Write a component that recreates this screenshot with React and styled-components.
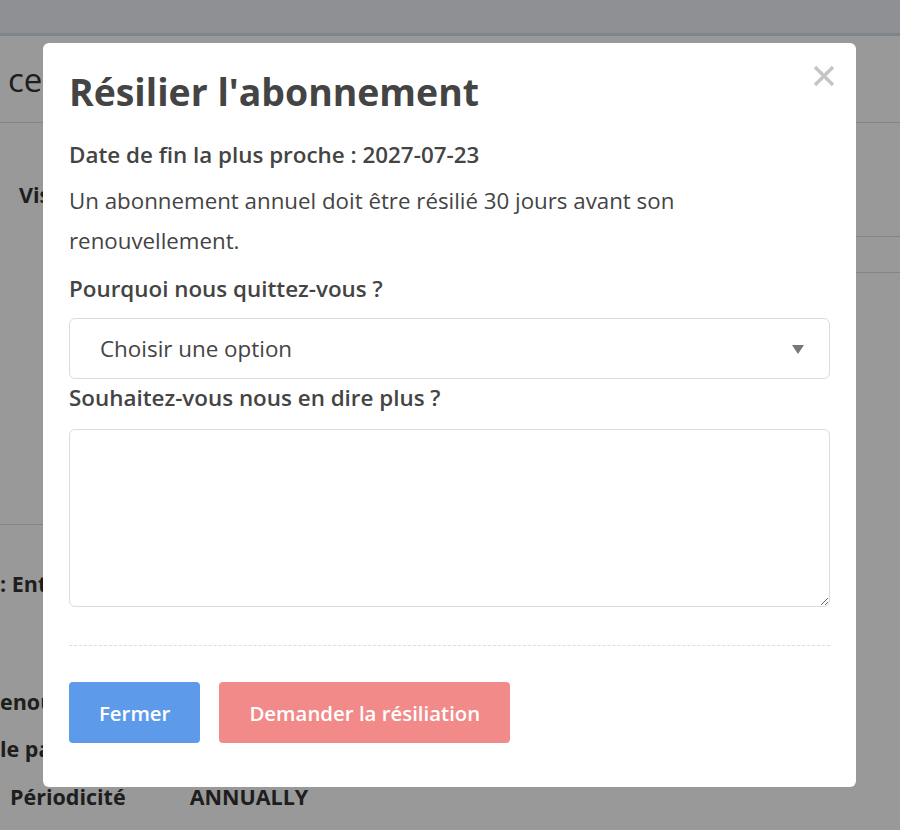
import React from "react";
import styled, { createGlobalStyle } from "styled-components";

const Global = createGlobalStyle`
  html, body { margin: 0; padding: 0; background: #fff; }
  body { font-family: "Open Sans", "Liberation Sans", sans-serif; color: #444; }
  * { box-sizing: border-box; }
`;

const Page = styled.div`
  width: 900px;
  height: 830px;
  overflow: hidden;
  background: #fff;
`;

const TopBar = styled.div`
  height: 36px;
  background: #edf0f5;
  border-bottom: 3px solid #d4dde8;
`;

const PageHead = styled.div`
  height: 87px;
  display: flex;
  align-items: center;
  padding: 0 0 0 8px;
  border-bottom: 1px solid #dcdcdc;
  font-size: 33px;
  color: #333;
`;

const PageBody = styled.div`
  display: grid;
  grid-template-columns: 450px 1fr;
`;

const LeftCol = styled.div`
  padding-top: 57px;
  height: 402px;
  border-bottom: 1px solid #dcdcdc;
`;

const RightCol = styled.div`
  padding-top: 113px;
`;

const RightRow = styled.div`
  height: 36px;
  border-top: 1px solid #dcdcdc;
`;

const BgLabel = styled.div`
  font-weight: 700;
  font-size: 21.5px;
  line-height: 29px;
  color: #333;
  padding-left: ${(p) => p.$indent || 0}px;
  margin-top: ${(p) => p.$top || 0}px;
  display: flex;
  gap: 64px;
`;

const Overlay = styled.div`
  position: fixed;
  inset: 0;
  background: rgba(0, 0, 0, 0.4);
  padding: 43px 0 0 43px;
`;

const Modal = styled.div`
  width: 813px;
  background: #fff;
  border-radius: 6px;
  padding: 25px 26px 44px 26px;
`;

const Header = styled.div`
  display: flex;
  justify-content: space-between;
  align-items: flex-start;
`;

const Title = styled.h2`
  margin: 0;
  font-size: 37.4px;
  line-height: 48px;
  font-weight: 700;
  color: #444;
`;

const Close = styled.button`
  border: 0;
  background: none;
  padding: 0;
  margin: -3px -5px 0 0;
  width: 22px;
  height: 22px;
  display: flex;
  cursor: pointer;
`;

const Strong = styled.div`
  font-size: 22.4px;
  line-height: 30px;
  font-weight: 600;
  color: #444;
  margin-top: ${(p) => p.$top}px;
`;

const Para = styled.p`
  margin: 11px 0 0;
  font-size: 22.3px;
  line-height: 40px;
  color: #444;
`;

const Select = styled.div`
  margin-top: 14px;
  height: 61px;
  border: 1px solid #dcdcdc;
  border-radius: 6px;
  display: flex;
  align-items: center;
  justify-content: space-between;
  padding: 0 25px 0 30px;
  font-size: 22.4px;
  color: #444;
`;

const Arrow = styled.span`
  width: 0;
  height: 0;
  border-left: 6px solid transparent;
  border-right: 6px solid transparent;
  border-top: 9px solid #777;
  margin-top: 2px;
`;

const TextArea = styled.textarea`
  display: block;
  margin-top: 16px;
  width: 100%;
  height: 178px;
  border: 1px solid #dcdcdc;
  border-radius: 6px;
  resize: vertical;
  font-family: inherit;
  font-size: 20px;
  outline: none;
`;

const Divider = styled.div`
  margin-top: 38px;
  border-top: 1px dashed #dddddd;
`;

const Actions = styled.div`
  margin-top: 36px;
  display: flex;
  gap: 19px;
`;

const Button = styled.button`
  height: 61px;
  padding: 0 ${(p) => p.$pad}px;
  border: 0;
  border-radius: 4px;
  background: ${(p) => p.$bg};
  color: #fff;
  font-family: inherit;
  font-size: 20.4px;
  font-weight: 550;
  cursor: pointer;
`;

export default function App() {
  return (
    <Page>
      <Global />
      <TopBar />
      <PageHead>ce compte</PageHead>
      <PageBody>
        <LeftCol>
          <BgLabel $indent={19}>Visibilité</BgLabel>
        </LeftCol>
        <RightCol>
          <RightRow />
          <RightRow />
        </RightCol>
      </PageBody>
      <BgLabel $top={44}>: Entreprise</BgLabel>
      <BgLabel $top={89}>enouvellement</BgLabel>
      <BgLabel $top={18}>le paiement</BgLabel>
      <BgLabel $top={19} $indent={10}>
        <span>Périodicité</span>
        <span>ANNUALLY</span>
      </BgLabel>

      <Overlay>
        <Modal>
          <Header>
            <Title>Résilier l'abonnement</Title>
            <Close aria-label="Fermer">
              <svg width="22" height="22" viewBox="0 0 22 22">
                <path d="M2 2 L20 20 M20 2 L2 20" stroke="#c4c4c4" strokeWidth="3.4" />
              </svg>
            </Close>
          </Header>
          <Strong $top={24}>Date de fin la plus proche : 2027-07-23</Strong>
          <Para>Un abonnement annuel doit être résilié 30 jours avant son renouvellement.</Para>
          <Strong $top={13}>Pourquoi nous quittez-vous ?</Strong>
          <Select>
            <span>Choisir une option</span>
            <Arrow />
          </Select>
          <Strong $top={4}>Souhaitez-vous nous en dire plus ?</Strong>
          <TextArea />
          <Divider />
          <Actions>
            <Button $bg="#5d9bea" $pad={30}>Fermer</Button>
            <Button $bg="#f28a8a" $pad={30}>Demander la résiliation</Button>
          </Actions>
        </Modal>
      </Overlay>
    </Page>
  );
}
